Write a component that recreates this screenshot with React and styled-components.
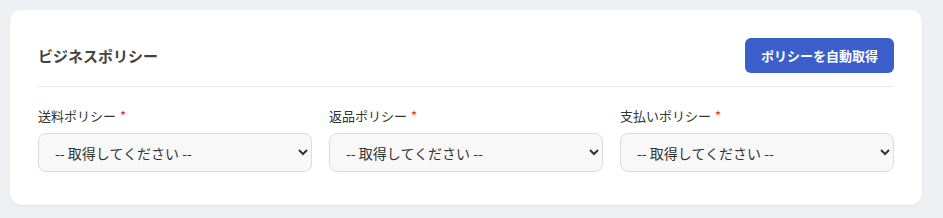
import React from "react";
import styled, { createGlobalStyle } from "styled-components";

const GlobalStyle = createGlobalStyle`
  html, body {
    margin: 0;
    padding: 0;
    background: #eef0f4;
    font-family: "Noto Sans CJK JP", "Noto Sans", sans-serif;
  }
`;

const Page = styled.div`
  padding: 10px;
`;

const Card = styled.section`
  width: 912px;
  box-sizing: border-box;
  background: #ffffff;
  border-radius: 12px;
  box-shadow: 0 1px 3px rgba(0, 0, 0, 0.06);
  padding: 28px 28px 33px;
`;

const Header = styled.div`
  display: flex;
  align-items: center;
  justify-content: space-between;
  padding-bottom: 13px;
  border-bottom: 1px solid #e8e9ec;
`;

const Title = styled.h2`
  margin: 0;
  font-size: 15px;
  font-weight: 700;
  color: #444;
`;

const FetchButton = styled.button`
  height: 35px;
  padding: 0 16px;
  border: none;
  border-radius: 6px;
  background: #3a5fcb;
  color: #fff;
  font-family: inherit;
  font-size: 13px;
  font-weight: 700;
  cursor: pointer;
`;

const Fields = styled.div`
  display: grid;
  grid-template-columns: repeat(3, 1fr);
  gap: 17px;
  margin-top: 19px;
`;

const Field = styled.div`
  display: flex;
  flex-direction: column;
  gap: 8px;
`;

const Label = styled.label`
  font-size: 13px;
  color: #333;
  line-height: 19px;
`;

const Required = styled.span`
  color: #e03131;
  margin-left: 4px;
`;

const Select = styled.select`
  height: 39px;
  width: 100%;
  box-sizing: border-box;
  padding: 0 10px 0 12px;
  border: 1px solid #dcdcdc;
  border-radius: 8px;
  background: #f8f8f8;
  color: #333;
  font-family: inherit;
  font-size: 14px;
  outline: none;
`;

const fields = ["送料ポリシー", "返品ポリシー", "支払いポリシー"];

export default function App() {
  return (
    <Page>
      <GlobalStyle />
      <Card>
        <Header>
          <Title>ビジネスポリシー</Title>
          <FetchButton>ポリシーを自動取得</FetchButton>
        </Header>
        <Fields>
          {fields.map((name) => (
            <Field key={name}>
              <Label>
                {name}
                <Required>*</Required>
              </Label>
              <Select defaultValue="">
                <option value="">-- 取得してください --</option>
              </Select>
            </Field>
          ))}
        </Fields>
      </Card>
    </Page>
  );
}
